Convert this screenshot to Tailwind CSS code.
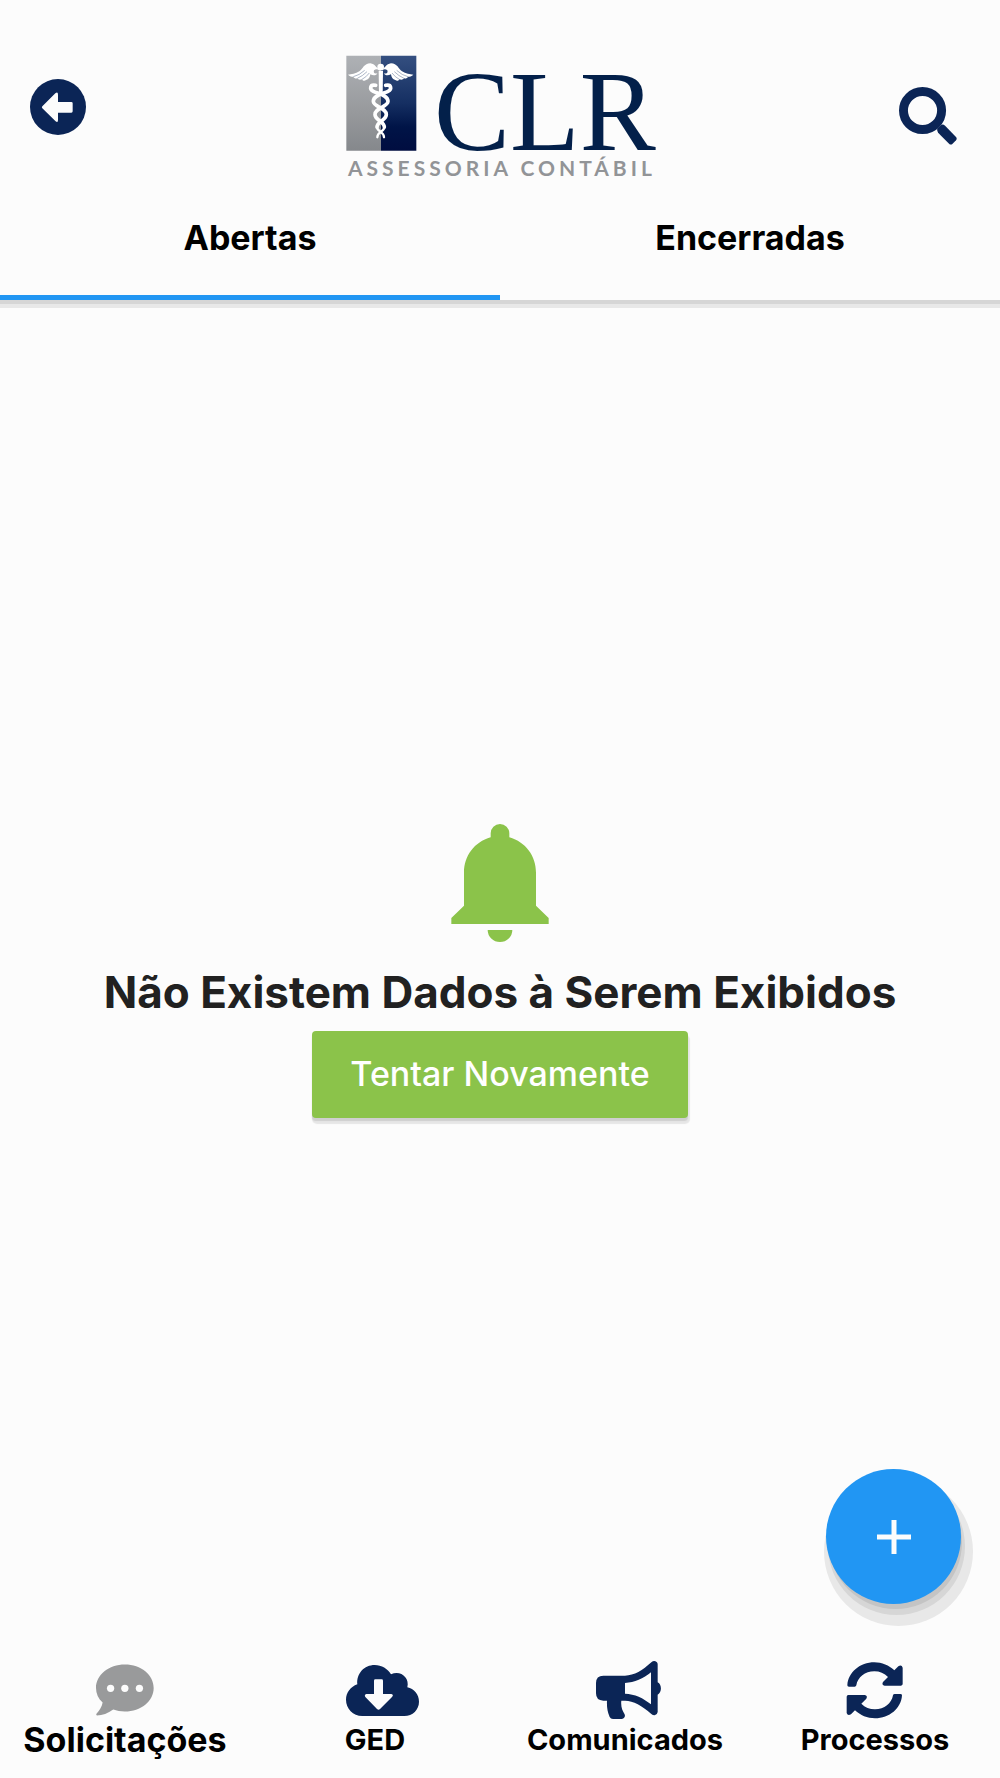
<!DOCTYPE html>
<html lang="pt-BR">
<head>
<meta charset="utf-8">
<meta name="viewport" content="width=device-width, initial-scale=1">
<title>Solicitações - CLR Assessoria Contábil</title>
<script src="https://cdn.jsdelivr.net/npm/@tailwindcss/browser@4"></script>
</head>
<body class="relative flex min-h-screen flex-col bg-[#fcfcfc] font-['Inter',sans-serif] text-black">
<header>
  <div class="grid grid-cols-[1fr_auto_1fr] items-center pt-10">
    <button type="button" aria-label="Voltar" class="ml-[30px] justify-self-start pb-4 text-[#0b2556]">
      <svg class="block h-14 w-14" viewBox="90 84 168 168"><circle cx="174" cy="168" r="84" fill="currentColor"/><path fill="#fcfcfc" d="M127 166 L166 127 Q174 121 174 131 V153 H214 Q218 153 218 157 V181 Q218 185 214 185 H174 V207 Q174 217 166 210 L127 172 Q124 169 127 166Z"/></svg>
    </button>
    <svg class="h-[150px] w-[340px]" viewBox="0 0 340 150" role="img" aria-label="CLR Assessoria Contábil">
      <defs>
        <linearGradient id="silver" x1="0" y1="0" x2="0" y2="1"><stop offset="0" stop-color="#aeb1b5"/><stop offset=".6" stop-color="#97999c"/><stop offset="1" stop-color="#85888c"/></linearGradient>
        <linearGradient id="navy" x1="0" y1="0" x2="0" y2="1"><stop offset="0" stop-color="#344f80"/><stop offset=".5" stop-color="#152f62"/><stop offset=".75" stop-color="#001447"/><stop offset="1" stop-color="#000d40"/></linearGradient>
        <g id="wing">
          <path fill="#fff" d="M148 88 C138 84 136 72 121 70 C102 71 99 86 88 94 C77 102 64 103 54 104 C59 109 65 110 70 110 C71 114 77 116 82 115 C85 120 91 120 96 118 C99 124 105 123 108 120 C116 119 120 112 121 103 C130 108 139 107 142 100 C132 102 130 98 132 91 C138 86 143 88 148 91Z"/>
          <path fill="none" stroke="#8392aa" stroke-width="2" d="M70 110 Q88 106 104 91 M82 115 Q98 108 111 95 M96 118 Q108 112 118 99"/>
        </g>
      </defs>
      <g transform="scale(.33333)">
        <path fill="url(#silver)" d="M49 47h104v285H49z"/>
        <path fill="url(#navy)" d="M153 47h106v285H153z"/>
        <use href="#wing"/>
        <use href="#wing" transform="matrix(-1 0 0 1 304 0)"/>
        <circle cx="152" cy="81" r="10" fill="#fff"/>
        <path fill="#fff" d="M146 92h13l-1 75h-11z"/>
        <g fill="none" stroke="#fff" stroke-linecap="round">
          <path stroke-width="11" d="M137 136 C119 132 118 148 130 154 C144 161 174 165 174 184 C174 201 134 204 135 224 C136 242 163 244 163 261"/>
          <path stroke-width="11" d="M167 136 C185 132 186 148 174 154 C160 161 130 165 130 184 C130 201 170 204 169 224 C168 242 141 244 141 261"/>
          <path stroke-width="7" d="M163 261 C163 276 142 274 142 292 M141 261 C141 276 162 274 162 292"/>
        </g>
      </g>
      <text x="104" y="110" class="fill-[#03204a] font-['Liberation_Serif',serif] text-[114px]">CLR</text>
      <text x="18" y="136" class="fill-[#929497] font-['Lato',sans-serif] text-[21px] font-bold tracking-[4px]">ASSESSORIA CONTÁBIL</text>
    </svg>
    <button type="button" aria-label="Buscar" class="mr-[43px] justify-self-end pt-0.5 text-[#0b2556]">
      <svg class="block h-[58px] w-[58px]" viewBox="85 81 175 175" fill="none" stroke="currentColor"><circle cx="156" cy="152" r="57.5" stroke-width="27"/><path fill="currentColor" stroke="none" d="M200 207 L213 195 Q219 193 224 198 L257 232 Q261 237 257 242 L246 253 Q241 257 236 252 L203 219 Q200 215 200 207Z"/></svg>
    </button>
  </div>
  <nav aria-label="Situação" class="grid grid-cols-2 text-center text-[34px] leading-10 font-bold shadow-[0_4px_0_#d6d6d6,0_8px_0_#e8e8e8]">
    <a href="#abertas" aria-current="page" class="border-b-5 border-[#2196f3] pt-7 pb-[37px]">Abertas</a>
    <a href="#encerradas" class="border-b-5 border-transparent pt-7 pb-[37px]">Encerradas</a>
  </nav>
</header>

<main class="flex flex-1 flex-col items-center justify-center">
  <svg class="mb-[22px] h-[118px] w-[98px] text-[#8bc34a]" viewBox="63 42 294 354" fill="currentColor" aria-hidden="true"><path d="M182 82 V70 A28 28 0 0 1 238 70 V82 C287 96 318 138 318 188 V287 L356 324 V342 H64 V324 L102 287 V188 C102 138 133 96 182 82Z M173 360 H247 A37 36 0 0 1 173 360Z"/></svg>
  <h1 class="text-center text-[44px] leading-14 font-bold text-[#212121]">Não Existem Dados à Serem Exibidos</h1>
  <button type="button" class="mt-[11px] rounded-[4px] bg-[#8bc34a] px-[38px] pt-[23px] pb-6 text-[34px] leading-10 font-medium text-white shadow-[0_3px_1px_#cfcfcf,1px_5px_1px_1px_#e6e6e6]">Tentar Novamente</button>
</main>

<button type="button" aria-label="Nova solicitação" class="absolute right-[39px] bottom-[174px] flex h-[135px] w-[135px] items-center justify-center rounded-full bg-[#2196f3] text-[#fcfcfc] shadow-[2px_6px_0_-1px_#c4c4c4,3px_10px_0_1px_#d6d6d6,5px_15px_0_7px_#e8e8e8]">
  <svg class="h-[34px] w-[34px]" viewBox="0 0 34 34" fill="currentColor"><path d="M14.5 0h5v14.5H34v5H19.5V34h-5V19.5H0v-5h14.5z"/></svg>
</button>

<nav aria-label="Principal" class="grid grid-cols-4 pt-[18px] pb-[18px] text-center text-[29px] leading-10 font-bold">
  <a href="#solicitacoes" aria-current="page" class="flex flex-col items-center">
    <span class="flex h-[60px] w-[58px] items-center text-[#999a9b]">
      <svg class="h-[52px] w-[58px] shrink-0" viewBox="288 72 175 156" fill="currentColor"><path d="M375 73 C424 73 462 104 462 144 C462 184 424 215 375 215 C362 215 351 213 340 209 C324 221 307 227 291 227 Q287 225 290 221 C299 211 306 200 308 188 C295 176 288 161 288 144 C288 104 327 73 375 73Z"/><g fill="#fcfcfc"><circle cx="332" cy="145" r="11"/><circle cx="375" cy="145" r="11"/><circle cx="419" cy="145" r="11"/></g></svg>
    </span>
    <span class="text-[34px]">Solicitações</span>
  </a>
  <a href="#ged" class="flex flex-col items-center">
    <span class="flex h-[60px] w-[58px] items-center text-[#0b2556]">
      <svg class="h-[51px] w-[73px] shrink-0" viewBox="1038 74 219 153" fill="currentColor"><path d="M1087 227 C1059 227 1038 205 1038 178 C1038 157 1052 139 1072 132 C1069 99 1093 74 1124 74 C1145 74 1163 85 1173 102 C1199 88 1230 110 1222 141 C1242 145 1257 163 1257 184 C1257 208 1238 227 1213 227Z"/><path fill="#fcfcfc" d="M1122 121 Q1122 117 1126 117 H1145 Q1149 117 1149 121 V161 H1174 Q1182 163 1176 170 L1140 206 Q1136 211 1131 206 L1096 170 Q1092 163 1099 161 H1122Z"/></svg>
    </span>
    <span>GED</span>
  </a>
  <a href="#comunicados" class="flex flex-col items-center">
    <span class="flex h-[60px] w-[58px] items-center text-[#0b2556]">
      <svg class="h-[58px] w-[65px] shrink-0" viewBox="288 63 195 174" fill="currentColor"><path fill-rule="evenodd" d="M310 107 H375 C403 107 428 91 454 67 Q462 60 470 66 Q473 69 473 73 V127 C486 134 486 156 473 164 V216 Q472 224 464 226 Q458 226 454 222 C426 196 400 183 375 182 H364 C362 200 367 212 373 221 C378 229 372 237 364 237 H339 Q332 237 329 231 C322 215 320 199 321 182 H310 Q288 182 288 160 V129 Q288 107 310 107Z M375 129 V161 C404 162 430 174 453 193 V97 C430 116 404 128 375 129Z"/></svg>
    </span>
    <span>Comunicados</span>
  </a>
  <a href="#processos" class="flex flex-col items-center">
    <span class="flex h-[60px] w-[58px] items-center text-[#0b2556]">
      <svg class="h-[57px] w-[57px] shrink-0" viewBox="1039 65 171 171" fill="currentColor"><path id="arc" d="M1043 135 C1045 96 1081 66 1124 66 C1147 66 1168 75 1184 90 L1196 78 Q1206 72 1209 82 V131 Q1209 135 1204 136 H1155 Q1145 134 1150 125 L1165 110 C1154 99 1140 93 1124 93 C1096 93 1074 111 1070 135 Q1069 139 1065 139 H1048 Q1043 139 1043 135Z"/><use href="#arc" transform="rotate(180 1125 150)"/></svg>
    </span>
    <span>Processos</span>
  </a>
</nav>
</body>
</html>
